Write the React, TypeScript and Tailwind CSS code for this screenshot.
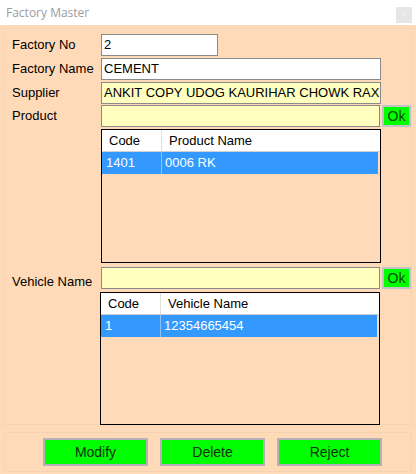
import React from "react";

const font = { fontFamily: '"Liberation Sans", Arial, sans-serif' };

function Input({ value, w, yellow }: { value: string; w: string; yellow?: boolean }) {
  return (
    <div
      className={`${w} h-[22px] border border-[#8a8a8a] ${yellow ? "bg-[#ffffc0]" : "bg-white"} flex items-center pl-[2px] text-[13px] text-black overflow-hidden whitespace-nowrap`}
    >
      {value}
    </div>
  );
}

function OkBtn() {
  return (
    <div className="ml-[2px] w-[29px] h-[22px] border-2 border-[#c3c3c3] bg-[#00ff00] flex items-center justify-center text-[14px] text-[#0b4a0b] leading-none">
      Ok
    </div>
  );
}

function Grid({ h1, h2, c1, c2, ml }: { h1: string; h2: string; c1: string; c2: string; ml: string }) {
  return (
    <div className={`${ml} w-[280px] border border-black bg-[#ffdab9] flex flex-col`}>
      <div className="h-[22px] bg-white flex text-[13px] text-black border-b border-[#d0d0d0]">
        <div className="w-[60px] h-full flex items-center pl-[7px] border-r border-[#e0e0e0]">{h1}</div>
        <div className="flex-1 h-full flex items-center pl-[7px]">{h2}</div>
      </div>
      <div className="h-[22px] mr-[2px] bg-[#3399ff] flex text-[13px] text-white">
        <div className="w-[60px] h-full flex items-center pl-[4px] border-r border-[#8cc2f7]">{c1}</div>
        <div className="flex-1 h-full flex items-center pl-[3px]">{c2}</div>
      </div>
      <div className="flex-1" />
    </div>
  );
}

function Btn({ label, w }: { label: string; w: string }) {
  return (
    <div className={`${w} h-[28px] border-2 border-[#b8b0b8] bg-[#00ff00] flex items-center justify-center text-[14px] text-[#103010]`}>
      {label}
    </div>
  );
}

export default function App() {
  return (
    <div className="w-[416px] h-[474px] bg-[#ffdab9] flex flex-col overflow-hidden" style={font}>
      <div className="h-[25px] bg-white flex items-center justify-between shrink-0">
        <span className="pl-[6px] text-[12px] text-[#9c9c9c]" style={{ fontFamily: '"Open Sans", "Noto Sans", sans-serif' }}>
          Factory Master
        </span>
        <div className="mr-[4px] mt-[5px] w-[16px] h-[16px] bg-[#e6e6e6] flex items-center justify-center text-[9px] text-[#f4f4f4]">
          ×
        </div>
      </div>

      <div className="mx-[4px] mt-[3px] h-[397px] border border-[#f7d3b2] flex flex-col text-[13px] text-black">
        <div className="flex items-center mt-[5px]">
          <div className="w-[96px] pl-[7px]">Factory No</div>
          <Input value="2" w="w-[117px]" />
        </div>
        <div className="flex items-center mt-[2px]">
          <div className="w-[96px] pl-[7px]">Factory Name</div>
          <Input value="CEMENT" w="w-[280px]" />
        </div>
        <div className="flex items-center mt-[2px]">
          <div className="w-[96px] pl-[7px]">Supplier</div>
          <Input value="ANKIT COPY UDOG KAURIHAR CHOWK RAX" w="w-[280px]" yellow />
        </div>
        <div className="flex items-center mt-[1px]">
          <div className="w-[96px] pl-[7px] self-start pt-[1px]">Product</div>
          <Input value="" w="w-[280px]" yellow />
          <OkBtn />
        </div>
        <div className="flex mt-[2px]">
          <Grid h1="Code" h2="Product Name" c1="1401" c2="0006 RK" ml="ml-[96px] h-[134px]" />
        </div>
        <div className="flex items-start mt-[4px] h-[22px]">
          <div className="w-[96px] pl-[7px] leading-[16px] pt-[7px]">Vehicle Name</div>
          <Input value="" w="w-[280px]" yellow />
          <OkBtn />
        </div>
        <div className="flex mt-[3px]">
          <Grid h1="Code" h2="Vehicle Name" c1="1" c2="12354665454" ml="ml-[95px] h-[133px]" />
        </div>
      </div>

      <div className="mx-[4px] mt-[7px] h-[40px] border border-[#f7d3b2] flex items-center pl-[38px] gap-[12px]">
        <Btn label="Modify" w="w-[105px]" />
        <Btn label="Delete" w="w-[105px]" />
        <Btn label="Reject" w="w-[105px]" />
      </div>
    </div>
  );
}
